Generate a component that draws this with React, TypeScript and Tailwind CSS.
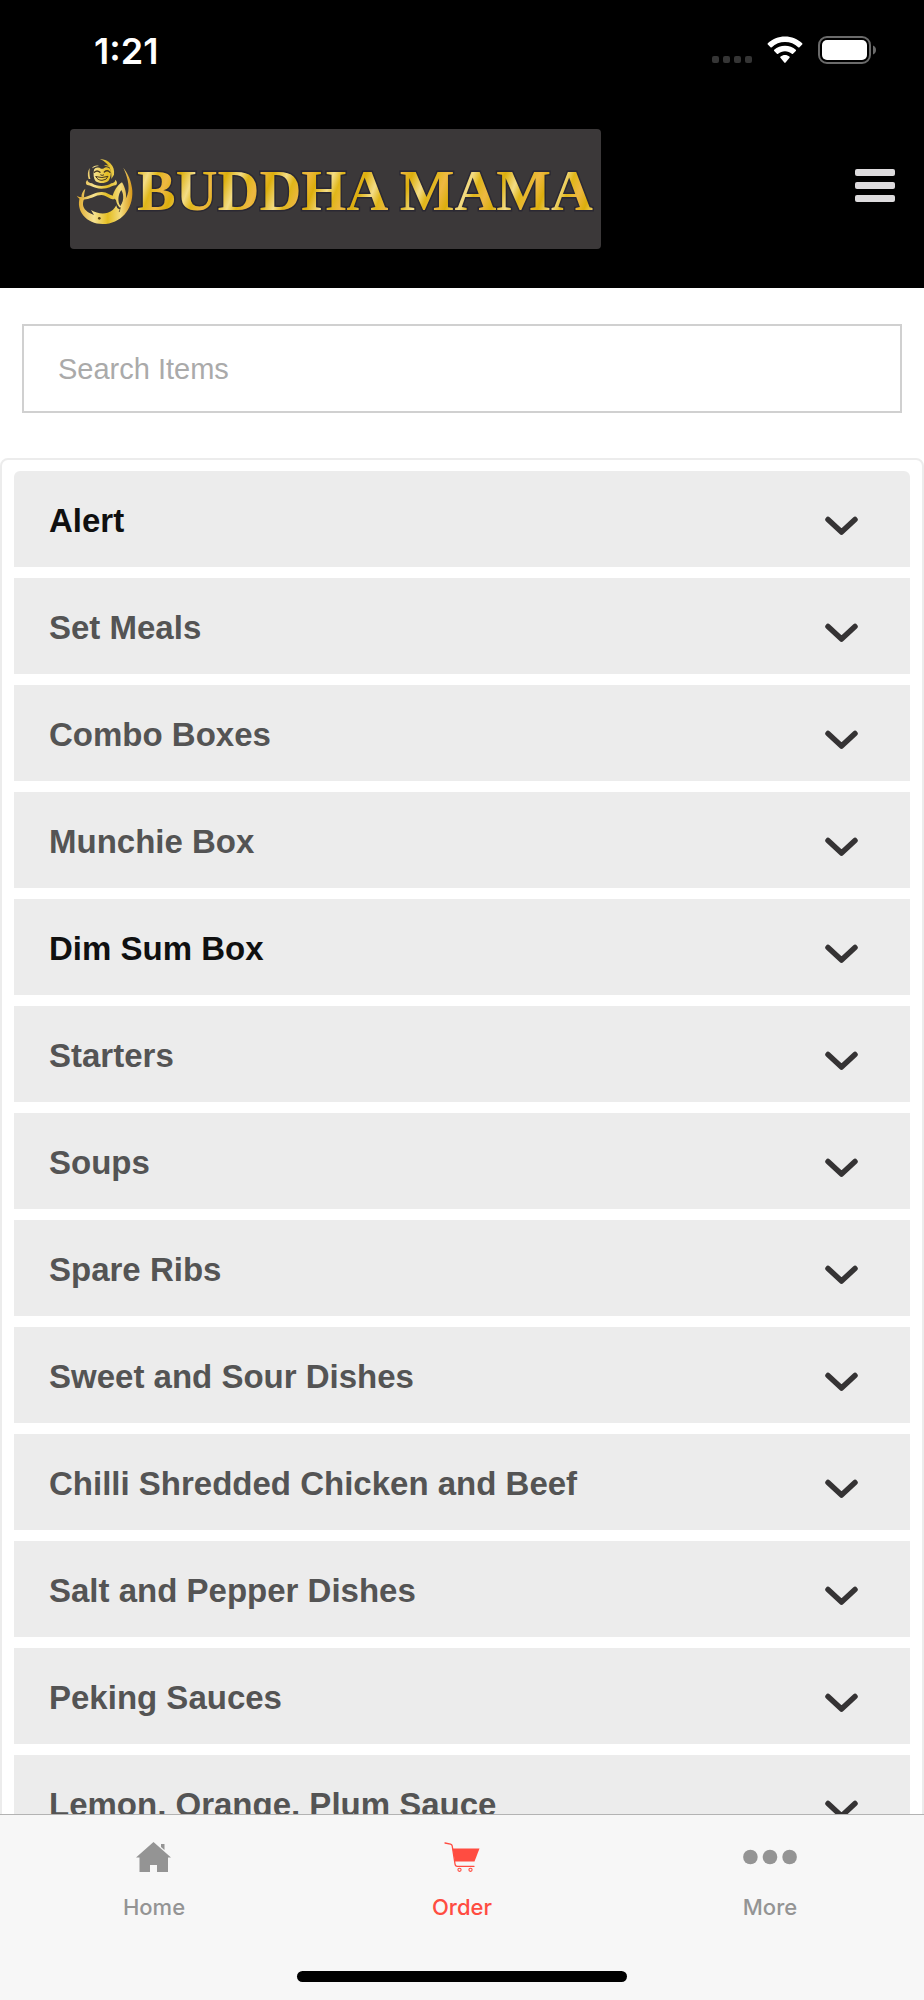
import { useState } from "react";
import clsx from "clsx";

type Category = { name: string; highlighted?: boolean };

const CATEGORIES: Category[] = [
  { name: "Alert", highlighted: true },
  { name: "Set Meals" },
  { name: "Combo Boxes" },
  { name: "Munchie Box" },
  { name: "Dim Sum Box", highlighted: true },
  { name: "Starters" },
  { name: "Soups" },
  { name: "Spare Ribs" },
  { name: "Sweet and Sour Dishes" },
  { name: "Chilli Shredded Chicken and Beef" },
  { name: "Salt and Pepper Dishes" },
  { name: "Peking Sauces" },
  { name: "Lemon, Orange, Plum Sauce" },
];

const UI_FONT = "font-['Inter','Liberation_Sans',sans-serif]";

function StatusBar() {
  return (
    <div className="flex h-[100px] items-center justify-between pl-[94px] pr-12">
      <span className={`${UI_FONT} pt-0.5 text-[36px] font-semibold leading-10 text-white`}>1:21</span>
      <div className="flex items-center gap-[15px]">
        <div className="flex gap-1 pt-[19px]">
          {[0, 1, 2, 3].map((dot) => (
            <span key={dot} className="size-[7px] rounded-[2px] bg-[#353535]" />
          ))}
        </div>
        <svg width="36" height="28" viewBox="0 0 36 28" fill="white" aria-hidden="true">
          <path d="M18 .6c6.6 0 12.700 2.500 17.200 6.700.4.400.4.900 0 1.300l-2.700 2.700c-.4.400-.9.400-1.300 0C27.700 8 23.100 6.100 18 6.100S8.300 8 4.800 11.300c-.4.400-.9.400-1.300 0L.8 8.600c-.4-.4-.4-.9 0-1.300C5.300 3.100 11.400.6 18 .6z" />
          <path d="M18 9.700c4.100 0 7.900 1.500 10.800 4.100.4.400.4.900 0 1.300l-2.800 2.700c-.4.400-.8.400-1.200 0-1.900-1.600-4.200-2.600-6.800-2.600s-5 1-6.800 2.600c-.4.400-.9.400-1.300 0l-2.700-2.700c-.4-.4-.4-.9 0-1.300C10.100 11.200 13.900 9.700 18 9.700z" />
          <path d="M18 18.900c1.700 0 3.200.6 4.400 1.500.4.400.5.900.1 1.300l-3.900 4.900c-.4.400-.9.400-1.300 0l-3.900-4.900c-.4-.4-.3-.9.200-1.300 1.200-.9 2.700-1.500 4.400-1.500z" />
        </svg>
        <svg width="58" height="28" viewBox="0 0 58 28" aria-hidden="true">
          <rect x="1" y="1" width="51" height="26" rx="8" fill="none" stroke="#6b6b6b" strokeWidth="2" />
          <rect x="4" y="4" width="45" height="20" rx="5" fill="white" />
          <path d="M55 9.500c2 .9 3 2.500 3 4.500s-1 3.600-3 4.500z" fill="#6b6b6b" />
        </svg>
      </div>
    </div>
  );
}

function Logo() {
  return (
    <svg width="531" height="120" viewBox="0 0 531 120" role="img" aria-label="Buddha Mama">
      <defs>
        <linearGradient id="gold" gradientUnits="userSpaceOnUse" x1="70" y1="30" x2="110" y2="46" spreadMethod="repeat">
          <stop offset="0" stopColor="#dcae0c" />
          <stop offset="0.3" stopColor="#f3dc86" />
          <stop offset="0.5" stopColor="#e0b619" />
          <stop offset="0.75" stopColor="#eeb843" />
          <stop offset="1" stopColor="#dcae0c" />
        </linearGradient>
        <linearGradient id="goldFigure" gradientUnits="userSpaceOnUse" x1="10" y1="0" x2="176" y2="0">
          <stop offset="0" stopColor="#dfa92c" />
          <stop offset="0.3" stopColor="#f6e291" />
          <stop offset="0.55" stopColor="#e3bd22" />
          <stop offset="0.78" stopColor="#f4dc7e" />
          <stop offset="1" stopColor="#d99716" />
        </linearGradient>
      </defs>
      <rect width="531" height="120" rx="4" fill="#3b3839" />

      {/* laughing figure */}
      <g transform="scale(0.3333) translate(12 78)">
        <g fill="url(#goldFigure)">
          <path d="M18 126C4 168 38 207 86 207c54 0 92-44 89-100-2-26-12-50-27-69 12 26 18 50 15 71-3 16-9 26-17 33l-8 20c-6 1-10-3-11-11-6 11-14 19-26 22-16 5-34 1-50-8l9 15c-19-6-33-18-33-32 0-9 2-15 6-20z" />
          <path d="M8 122c9 5 18 6 28 3 18-5 32-15 48-14 15 0 25 11 39 13l-2 9c-16 0-23-12-39-13-17 0-28 11-47 13-12 2-21-1-27-11z" />
          <path d="M115 126c5-18 14-34 29-44 10 16 15 35 11 56l-12 24c-8-4-15-15-17-27zm27-21c-10 13-12 36-3 48 10-12 12-33 3-48z" fillRule="evenodd" />
          <path d="M34 101c-7 6-11 14-12 24l8 2c0-9 2-17 4-26z" />
          <path d="M40 75c-7 6-5 15 3 16 11 1 16 10 39 10 24 0 29-8 42-10 7-2 6-12 0-17 0 7-5 10-12 11-8 6-18 8-29 8s-22-2-29-8c-8-1-13-4-14-10z" />
          <path d="M78 12c26 1 46 21 42 47l-8 13c2-25-4-46-34-60zM47 39c-6 10-7 21-3 33h5c-3-11-3-22-2-33z" />
          <path d="M60 44c4-8 15-9 21-3h7c6-7 17-6 22 3 2 14-2 28-8 35-10 7-27 7-37 0-6-8-8-22-5-35z" />
          <path d="M54 40c4-7 12-10 21-7-8 1-14 3-21 7zM90 32c8-3 16-1 21 6-7-3-13-5-21-6z" />
        </g>
        <g fill="none" stroke="#45361f" strokeWidth="4" strokeLinecap="round">
          <path d="M61 52q8-8 17 0M91 51q9-8 17 1" />
          <path d="M80 60q4 3 9 0M66 65q18 6 36-1q-4 12-18 12q-14 0-18-11" strokeWidth="3" />
          <path d="M139 158l-3 12" strokeWidth="2" />
        </g>
        <circle cx="76" cy="190" r="4" fill="#5b4515" />
      </g>

      <g
        fill="url(#gold)"
        stroke="#2b2933"
        strokeWidth="3"
        paintOrder="stroke"
        className="font-['Liberation_Serif',serif] text-[58px] font-bold"
      >
        <text x="67" y="81">BUDDHA MAMA</text>
      </g>
    </svg>
  );
}

function Chevron() {
  return (
    <svg width="34" height="20" viewBox="0 0 34 20" className="mt-[10px] shrink-0" aria-hidden="true">
      <path d="M4 3.500L17.500 16L31 3.500" fill="none" stroke="#353334" strokeWidth="5.500" strokeLinecap="round" strokeLinejoin="round" />
    </svg>
  );
}

function HomeIcon() {
  return (
    <svg width="36" height="30" viewBox="0 0 36 30" fill="currentColor" aria-hidden="true">
      <path d="M17.500 0L35 15.500H32V30H21V23H14V30H3.500V15.500H0Z" />
      <path d="M25 2h3.500v6l-3.500-3z" />
    </svg>
  );
}

function CartIcon() {
  return (
    <svg width="36" height="30" viewBox="0 0 36 30" aria-hidden="true">
      <path d="M8.500 6.500H35.500L30.500 19.500H11Z" fill="currentColor" />
      <path d="M1 1l5.500 1.200c1 .3 1.500.8 1.700 1.700L11 22c.2 1.600.9 2.300 2.200 2.300H30" fill="none" stroke="currentColor" strokeWidth="1.300" strokeLinecap="round" />
      <circle cx="15.500" cy="27.800" r="1.600" fill="none" stroke="currentColor" strokeWidth="1.100" />
      <circle cx="26.500" cy="27.800" r="1.600" fill="none" stroke="currentColor" strokeWidth="1.100" />
    </svg>
  );
}

function MoreIcon() {
  return (
    <svg width="54" height="30" viewBox="0 0 54 30" fill="currentColor" aria-hidden="true">
      <circle cx="7.400" cy="15" r="7.300" />
      <circle cx="27" cy="15" r="7.300" />
      <circle cx="46.600" cy="15" r="7.300" />
    </svg>
  );
}

const TABS = [
  { label: "Home", Icon: HomeIcon },
  { label: "Order", Icon: CartIcon },
  { label: "More", Icon: MoreIcon },
];

function TabBar() {
  const [active, setActive] = useState("Order");

  return (
    <footer className={`${UI_FONT} shrink-0 border-t border-[#b3b3b3] bg-[#f7f7f7]`}>
      <nav className="grid grid-cols-3 pt-[27px]">
        {TABS.map(({ label, Icon }) => (
          <button
            key={label}
            type="button"
            onClick={() => setActive(label)}
            className={clsx(
              "flex flex-col items-center gap-[21px] text-[22px] font-medium leading-7",
              active === label ? "text-[#ff4c41]" : "text-[#949494]"
            )}
          >
            <Icon />
            {label}
          </button>
        ))}
      </nav>
      <div className="mx-auto mb-[18px] mt-[50px] h-[11px] w-[330px] rounded-full bg-black" />
    </footer>
  );
}

export default function App() {
  const [query, setQuery] = useState("");

  return (
    <div className="flex h-screen flex-col bg-white font-['Liberation_Sans',Arial,sans-serif]">
      <header className="shrink-0 bg-black">
        <StatusBar />
        <div className="flex items-center justify-between pb-[39px] pl-[70px] pr-[29px] pt-[29px]">
          <Logo />
          <button type="button" aria-label="Open menu" className="flex flex-col gap-[6px] pb-2">
            <span className="h-[7px] w-10 rounded-[2px] bg-[#dddbdd]" />
            <span className="h-[7px] w-10 rounded-[2px] bg-[#dddbdd]" />
            <span className="h-[7px] w-10 rounded-[2px] bg-[#dddbdd]" />
          </button>
        </div>
      </header>

      <main className="min-h-0 flex-1 overflow-y-auto [scrollbar-width:none]">
        <div className="px-[22px] pb-[45px] pt-9">
          <input
            type="text"
            aria-label="Search Items"
            placeholder="Search Items"
            value={query}
            onChange={(e) => setQuery(e.target.value)}
            className="block h-[89px] w-full border-2 border-[#d0d0d0] bg-white px-[34px] pt-0.5 text-[29px] text-[#353334] outline-none placeholder:text-[#aaaaaa]"
          />
        </div>

        <ul className="flex flex-col gap-[11px] rounded-t-lg border-2 border-[#ececec] px-3 py-[11px]">
          {CATEGORIES.map(({ name, highlighted }) => (
            <li key={name} className="group">
              <button
                type="button"
                className={clsx(
                  "flex h-24 w-full items-center justify-between bg-[#ececec] pl-[35px] pr-[52px] pt-[3px] text-left text-[33px] font-bold group-first:rounded-t-md",
                  highlighted ? "text-[#101010]" : "text-[#545454]"
                )}
              >
                {name}
                <Chevron />
              </button>
            </li>
          ))}
        </ul>
      </main>

      <TabBar />
    </div>
  );
}
